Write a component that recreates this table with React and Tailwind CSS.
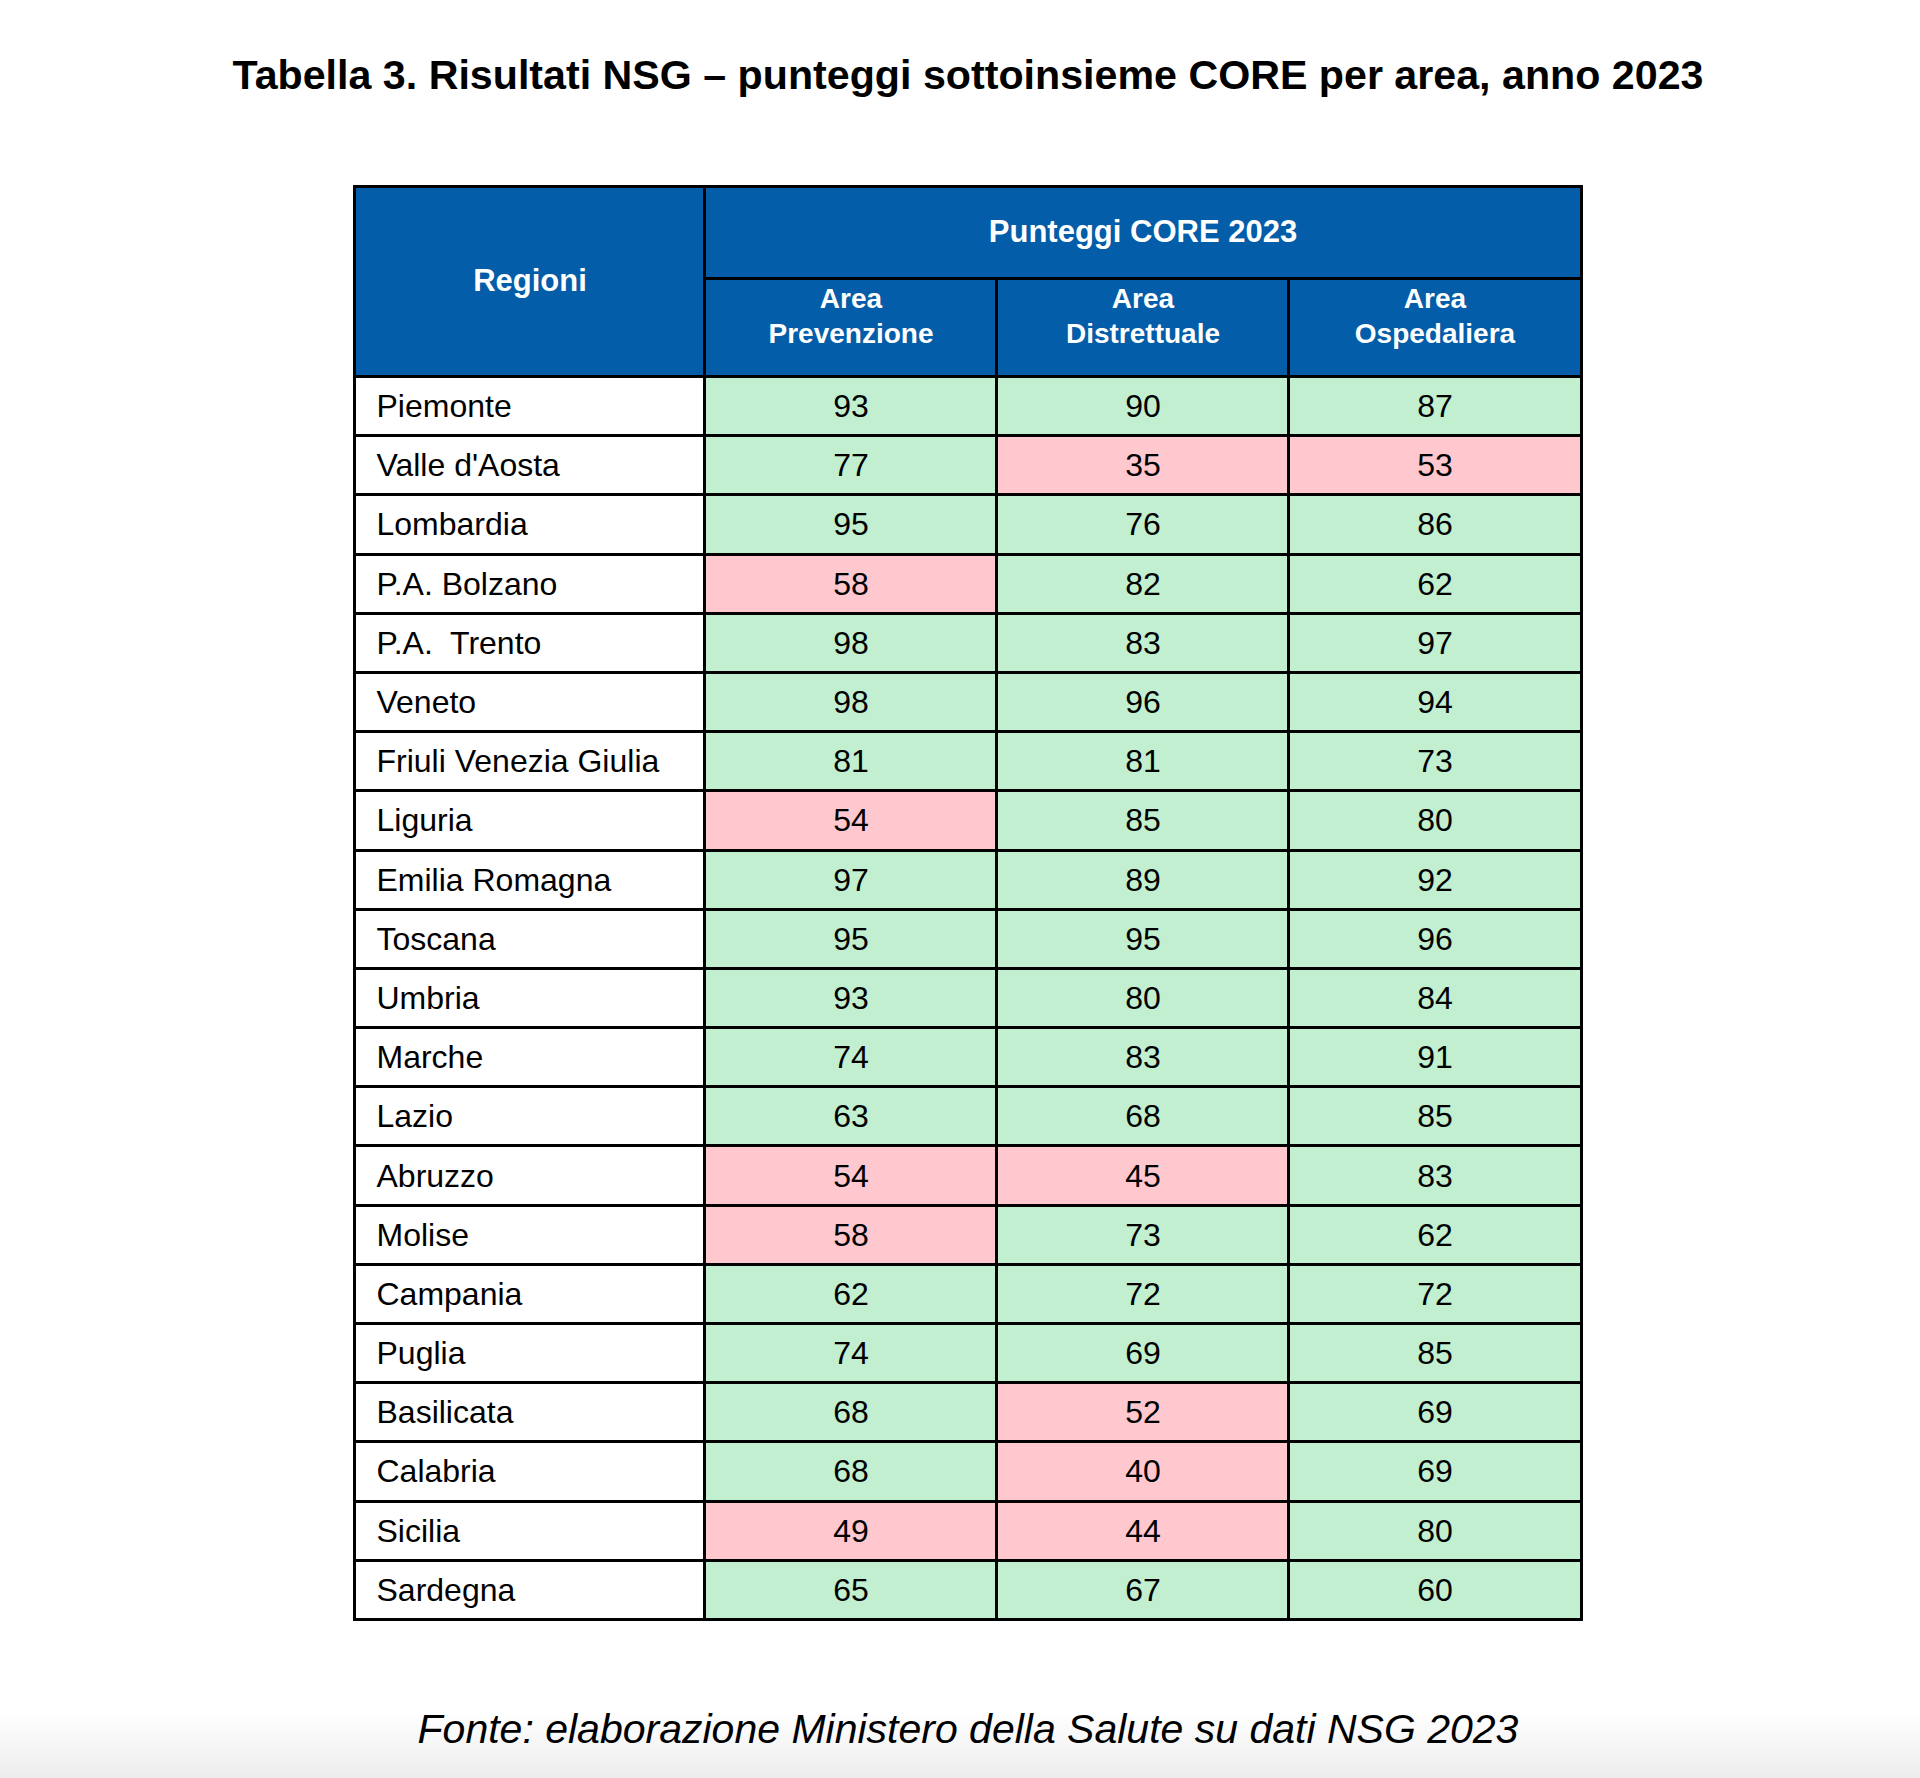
import React from 'react';

// Punteggi CORE 2023 per regione: [prevenzione, distrettuale, ospedaliera]
const rows = [
  ['Piemonte', 93, 90, 87],
  ["Valle d'Aosta", 77, 35, 53],
  ['Lombardia', 95, 76, 86],
  ['P.A. Bolzano', 58, 82, 62],
  ['P.A.\u00a0 Trento', 98, 83, 97],
  ['Veneto', 98, 96, 94],
  ['Friuli Venezia Giulia', 81, 81, 73],
  ['Liguria', 54, 85, 80],
  ['Emilia Romagna', 97, 89, 92],
  ['Toscana', 95, 95, 96],
  ['Umbria', 93, 80, 84],
  ['Marche', 74, 83, 91],
  ['Lazio', 63, 68, 85],
  ['Abruzzo', 54, 45, 83],
  ['Molise', 58, 73, 62],
  ['Campania', 62, 72, 72],
  ['Puglia', 74, 69, 85],
  ['Basilicata', 68, 52, 69],
  ['Calabria', 68, 40, 69],
  ['Sicilia', 49, 44, 80],
  ['Sardegna', 65, 67, 60],
];

// soglia di adempienza: sotto 60 la cella è rossa
const scoreCell = (value) =>
  value < 60 ? 'bg-[#ffc7ce]' : 'bg-[#c1efcf]';

const App = () => {
  return (
    <div className="min-h-[1778px] bg-[linear-gradient(to_bottom,#ffffff_0px,#ffffff_1712px,#ededed_1778px)] font-['Liberation_Sans',Arial,sans-serif] text-black">
      <div className="flex flex-col items-center pl-4 pt-[51px]">
        <h1 className="text-[41.2px] leading-[48px] font-bold">
          Tabella 3. Risultati NSG – punteggi sottoinsieme CORE per area, anno 2023
        </h1>

        <table className="mt-[86px] w-[1226px] border-collapse border-[3px] border-black table-fixed">
          <colgroup>
            <col className="w-[350px]" />
            <col className="w-[292px]" />
            <col className="w-[292px]" />
            <col className="w-[292px]" />
          </colgroup>
          <thead className="bg-[#035da8] text-white font-bold">
            <tr className="h-[92px]">
              <th
                rowSpan={2}
                className="border-[3px] border-black text-[31px] font-bold align-middle"
              >
                Regioni
              </th>
              <th
                colSpan={3}
                className="border-[3px] border-black text-[31px] font-bold align-middle"
              >
                Punteggi CORE 2023
              </th>
            </tr>
            <tr className="h-[98px]">
              {[['Area', 'Prevenzione'], ['Area', 'Distrettuale'], ['Area', 'Ospedaliera']].map(([a, b]) => (
                <th
                  key={b}
                  className="border-[3px] border-black text-[28px] leading-[35px] font-bold align-top pt-[1px]"
                >
                  {a}
                  <br />
                  {b}
                </th>
              ))}
            </tr>
          </thead>
          <tbody className="text-[32px]">
            {rows.map(([name, prev, dist, osp]) => (
              <tr key={name} className="h-[59.2px]">
                <td className="border-[3px] border-black bg-white pl-[20px] leading-none">
                  {name}
                </td>
                {[prev, dist, osp].map((v, i) => (
                  <td
                    key={i}
                    className={`border-[3px] border-black text-center leading-none ${scoreCell(v)}`}
                  >
                    {v}
                  </td>
                ))}
              </tr>
            ))}
          </tbody>
        </table>

        <p className="mt-[84px] text-[41px] leading-[48px] italic">
          Fonte: elaborazione Ministero della Salute su dati NSG 2023
        </p>
      </div>
    </div>
  );
};

export default App;
